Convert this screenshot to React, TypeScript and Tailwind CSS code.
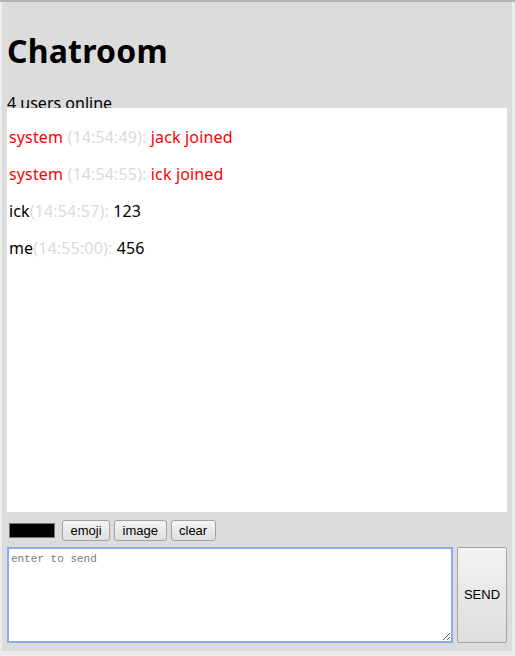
const messages = [
  { id: 1, user: 'system', time: '14:54:49', text: 'jack joined', system: true },
  { id: 2, user: 'system', time: '14:54:55', text: 'ick joined', system: true },
  { id: 3, user: 'ick', time: '14:54:57', text: '123', system: false },
  { id: 4, user: 'me', time: '14:55:00', text: '456', system: false },
];

const btn =
  'h-[21px] rounded-[3px] border border-[#a3a3a3] bg-gradient-to-b from-[#f6f6f6] to-[#dedede] px-[7.5px] text-[13px] leading-none text-black';

export default function App() {
  return (
    <div className="h-[656px] w-[515px] overflow-hidden border-t-2 border-[#b2b2b2] bg-[#ececec] font-['Noto_Sans',sans-serif]">
      <div className="ml-[2px] flex h-[649px] w-[510px] flex-col bg-[#dcdcdc] px-[5px]">
        <h1 className="mt-[29px] text-[32px] leading-[40px] font-bold tracking-[0.2px] text-black">
          Chatroom
        </h1>
        <div className="mt-[21px] h-[16px] text-[16px] leading-[22px] text-black">
          4 users online
        </div>

        {/* message list */}
        <div className="relative flex h-[404px] flex-col gap-4 bg-white pt-[19px] pl-[2px] text-[16px] leading-[21px] tracking-[0.15px]">
          {messages.map((m) => (
            <p key={m.id} className={m.system ? 'text-[#ff0000]' : 'text-black'}>
              {m.user}
              {m.system ? ' ' : ''}
              <span className="text-[#dadada]">({m.time}): </span>
              {m.text}
            </p>
          ))}
        </div>

        {/* toolbar */}
        <div className="mt-[8px] flex items-center gap-[4px] pl-[2px] font-['Liberation_Sans',sans-serif]">
          <div className="mr-[3px] h-[15px] w-[46px] border border-[#767676] bg-black" />
          <button className={btn}>emoji</button>
          <button className={btn}>image</button>
          <button className={btn}>clear</button>
        </div>

        <div className="mt-[6px] flex gap-[4px]">
          <textarea
            autoFocus
            placeholder="enter to send"
            className="h-[96px] w-[446px] resize-y border-2 border-[#8aaee4] bg-white px-[2px] py-[4px] font-['Liberation_Mono',monospace] text-[11px] leading-[13px] outline-none placeholder:text-[#7a7a7a]"
          />
          <button className="h-[96px] w-[50px] rounded-[2px] border border-[#a3a3a3] bg-gradient-to-b from-[#f3f3f3] to-[#dddddd] font-['Liberation_Sans',sans-serif] text-[13px] text-black">
            SEND
          </button>
        </div>
      </div>
    </div>
  );
}
